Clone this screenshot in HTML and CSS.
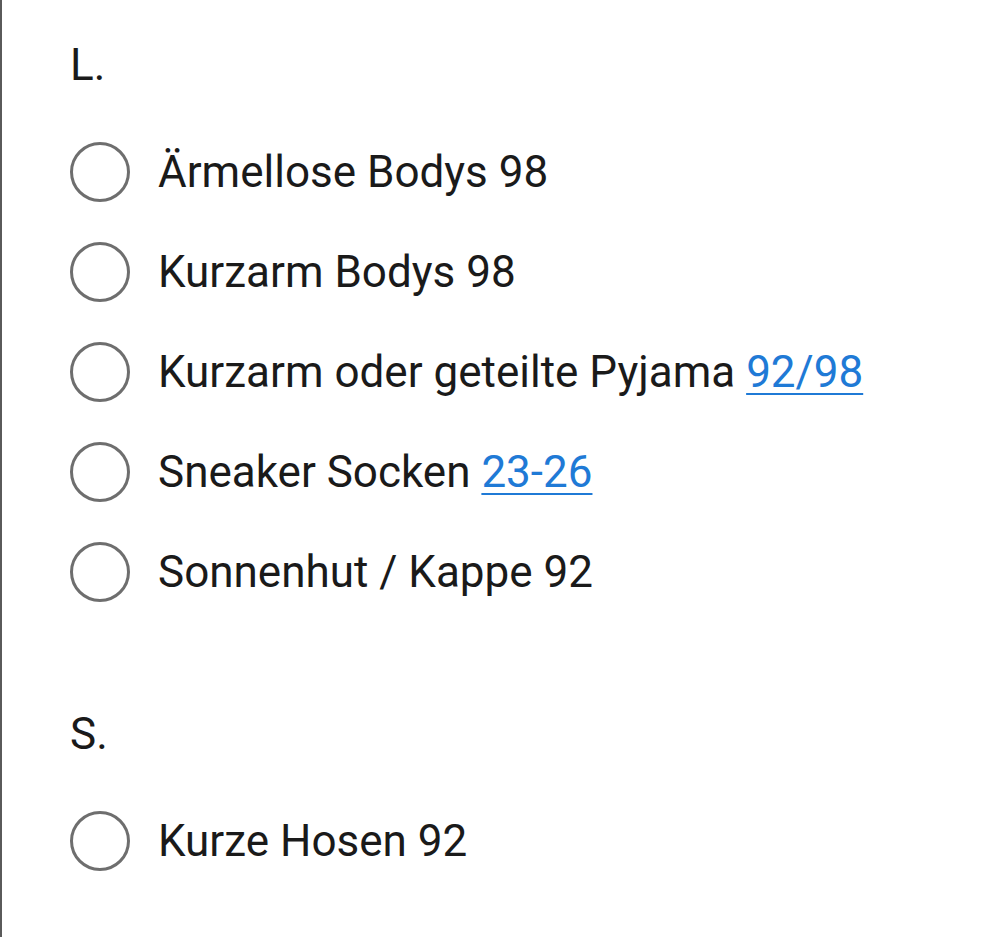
FILE: index.html
```html
<!DOCTYPE html>
<html lang="de">
<head>
    <meta charset="UTF-8">
    <meta name="viewport" content="width=device-width, initial-scale=1.0">
    <title>Packliste</title>
    <link rel="stylesheet" href="styles.css">
</head>
<body>
    <div class="page">
        <section class="group">
            <h2>L.</h2>
            <ul class="checklist">
                <li><span class="radio"></span><span class="label">Ärmellose Bodys 98</span></li>
                <li><span class="radio"></span><span class="label">Kurzarm Bodys 98</span></li>
                <li><span class="radio"></span><span class="label">Kurzarm oder geteilte Pyjama <a href="#">92/98</a></span></li>
                <li><span class="radio"></span><span class="label">Sneaker Socken <a href="#">23-26</a></span></li>
                <li><span class="radio"></span><span class="label">Sonnenhut / Kappe 92</span></li>
            </ul>
        </section>

        <section class="group">
            <h2>S.</h2>
            <ul class="checklist">
                <li><span class="radio"></span><span class="label">Kurze Hosen 92</span></li>
            </ul>
        </section>
    </div>
</body>
</html>
```

FILE: styles.css
```css
html, body {
    margin: 0;
    padding: 0;
    background-color: #ffffff;
}
body {
    font-family: Roboto, "Noto Sans", sans-serif;
    color: #1a1a1a;
    min-height: 937px;
    border-left: 2px solid #5a5a5a;
    box-sizing: border-box;
}
.page {
    padding: 40px 0 0 68px;
}
.group + .group {
    margin-top: 87px;
}
h2 {
    margin: 0 0 32px;
    font-size: 44px;
    font-weight: 400;
    line-height: 50px;
}
.checklist {
    list-style-type: none;
    margin: 0;
    padding: 0;
}
.checklist li {
    display: flex;
    align-items: center;
    height: 100px;
    font-size: 44px;
}
.radio {
    width: 54px;
    height: 54px;
    border: 3px solid #6e6e6e;
    border-radius: 50%;
    flex-shrink: 0;
    margin-right: 28px;
}
.label a {
    color: #1f7ad6;
    text-decoration: underline;
    text-underline-offset: 6px;
    text-decoration-thickness: 2px;
}
```
